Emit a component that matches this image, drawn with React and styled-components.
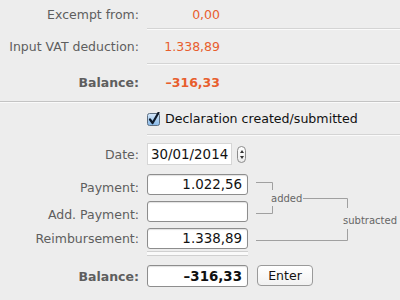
import styled, { createGlobalStyle } from "styled-components";

const GlobalStyle = createGlobalStyle`
  html, body {
    margin: 0;
    padding: 0;
    background: #ededed;
  }
  body {
    font-family: "DejaVu Sans", "Liberation Sans", sans-serif;
    font-size: 12px;
    width: 400px;
    height: 300px;
    overflow: hidden;
  }
`;

const Page = styled.div`
  width: 400px;
  height: 300px;
  background: #ededed;
`;

const Summary = styled.div`
  border-bottom: 1px solid #c4c4c4;
  box-shadow: 0 1px 0 #fafafa;
`;

const SummaryRow = styled.div`
  display: grid;
  grid-template-columns: 139px 1fr;
  column-gap: 8px;
  align-items: center;
  height: ${(p) => p.$height}px;
`;

const Label = styled.div`
  text-align: right;
  color: #5e5e5e;
  font-size: 12.5px;
  font-weight: ${(p) => (p.$bold ? "bold" : "normal")};
  white-space: nowrap;
`;

const Amount = styled.div`
  height: 100%;
  display: flex;
  align-items: center;
  box-sizing: border-box;
  color: #e85e2d;
  font-size: 12.5px;
  font-weight: ${(p) => (p.$bold ? "bold" : "normal")};
  border-bottom: ${(p) => (p.$line ? "1px solid #d4d4d4" : "none")};
  box-shadow: ${(p) => (p.$line ? "0 1px 0 #fafafa" : "none")};
`;

const AmountText = styled.span`
  width: 73px;
  text-align: right;
`;

const CheckRow = styled.div`
  display: grid;
  grid-template-columns: 139px 1fr;
  column-gap: 8px;
  height: 32px;
  margin-top: 1px;
`;

const CheckCell = styled.label`
  display: flex;
  align-items: center;
  gap: 4px;
  border-bottom: 1px solid #d4d4d4;
  box-shadow: 0 1px 0 #fafafa;
  font-size: 12.6px;
  color: #111;
`;

const Form = styled.div`
  display: grid;
  grid-template-columns: 139px 101px 1fr;
  column-gap: 8px;
  padding-top: 8px;
`;

const FormLabel = styled(Label)`
  align-self: center;
  margin-bottom: ${(p) => p.$gap || 0}px;
`;

const DateCell = styled.div`
  display: flex;
  align-items: center;
  gap: 5px;
  height: 22px;
  margin-bottom: 9px;
`;

const DateField = styled.div`
  width: 85px;
  height: 22px;
  box-sizing: border-box;
  background: #fff;
  border: 1px solid #d6d6d6;
  padding-left: 3px;
  display: flex;
  align-items: center;
  font-size: 13.4px;
  color: #111;
`;

const Stepper = styled.div`
  width: 9px;
  height: 17px;
  box-sizing: border-box;
  border: 1px solid #8c8c8c;
  border-radius: 5px;
  background: linear-gradient(#ffffff, #ececec);
  display: flex;
  flex-direction: column;
  align-items: center;
  justify-content: space-between;
  padding: 3px 0;
`;

const Arrow = styled.span`
  width: 0;
  height: 0;
  border-left: 2px solid transparent;
  border-right: 2px solid transparent;
  ${(p) =>
    p.$down ? "border-top: 3px solid #333;" : "border-bottom: 3px solid #333;"}
`;

const Field = styled.div`
  height: ${(p) => (p.$tall ? 22 : 21)}px;
  box-sizing: border-box;
  background: #fff;
  border: 1px solid #8d8d8d;
  border-radius: 3px;
  box-shadow: inset 0 1px 1px rgba(0, 0, 0, 0.12);
  display: flex;
  align-items: center;
  justify-content: flex-end;
  padding-right: 5px;
  font-size: 13.4px;
  color: #111;
  font-weight: ${(p) => (p.$bold ? "bold" : "normal")};
  margin-bottom: ${(p) => p.$gap || 0}px;
`;

const Bracket = styled.svg`
  grid-column: 3;
  grid-row: 2 / span 3;
  display: block;
  overflow: visible;
`;

const Divider = styled.div`
  grid-column: 2;
  height: 3px;
  border-top: 1px solid #d0d0d0;
  border-bottom: 1px solid #d0d0d0;
  background: #fafafa;
  margin: 2px 0 9px;
`;

const Button = styled.button`
  justify-self: start;
  width: 56px;
  height: 21px;
  margin-left: 1px;
  box-sizing: border-box;
  border: 1px solid #9a9a9a;
  border-radius: 4px;
  background: linear-gradient(#ffffff, #f1f1f1);
  font-family: "DejaVu Sans", "Liberation Sans", sans-serif;
  font-size: 12.5px;
  color: #111;
  padding: 0;
`;

const CheckBox = () => (
  <svg width="14" height="14" viewBox="0 0 14 14">
    <defs>
      <linearGradient id="cb" x1="0" y1="0" x2="0" y2="1">
        <stop offset="0" stopColor="#d6e8fa" />
        <stop offset="1" stopColor="#86b8e8" />
      </linearGradient>
    </defs>
    <rect x="0.5" y="1.5" width="12" height="12" rx="2" fill="url(#cb)" stroke="#5e6f82" />
    <path d="M3 7.5 L5.6 11 L11.5 0.8" fill="none" stroke="#0e1a2a" strokeWidth="2.2" strokeLinecap="round" strokeLinejoin="round" />
  </svg>
);

const summary = [
  { label: "Excempt from:", value: "0,00", height: 29, line: true },
  { label: "Input VAT deduction:", value: "1.338,89", height: 35, line: true },
  { label: "Balance:", value: "\u2013316,33", height: 37, bold: true },
];

export default function App() {
  return (
    <Page>
      <GlobalStyle />
      <Summary>
        {summary.map((row) => (
          <SummaryRow key={row.label} $height={row.height}>
            <Label $bold={row.bold}>{row.label}</Label>
            <Amount $line={row.line} $bold={row.bold}>
              <AmountText>{row.value}</AmountText>
            </Amount>
          </SummaryRow>
        ))}
      </Summary>
      <CheckRow>
        <span />
        <CheckCell>
          <CheckBox />
          Declaration created/submitted
        </CheckCell>
      </CheckRow>
      <Form>
        <FormLabel $gap={9}>Date:</FormLabel>
        <DateCell>
          <DateField>30/01/2014</DateField>
          <Stepper>
            <Arrow />
            <Arrow $down />
          </Stepper>
        </DateCell>
        <span />

        <FormLabel>Payment:</FormLabel>
        <Field $gap={6}>1.022,56</Field>
        <Bracket width="144" height="75" viewBox="0 0 144 75">
          <g fill="none" stroke="#a0a0a0" strokeWidth="1">
            <path d="M0 8.5 H16.5 V16" />
            <path d="M16.5 32 V39.5 H0" />
            <path d="M47 24.5 H91.5 V34" />
            <path d="M91.5 55 V66.5 H0" />
          </g>
          <g fill="#666" fontFamily="DejaVu Sans, sans-serif" fontSize="10">
            <text x="15" y="28">added</text>
            <text x="87" y="49.5">subtracted</text>
          </g>
        </Bracket>

        <FormLabel>Add. Payment:</FormLabel>
        <Field $gap={6} />

        <FormLabel>Reimbursement:</FormLabel>
        <Field>1.338,89</Field>

        <span />
        <Divider />
        <span />

        <FormLabel $bold>Balance:</FormLabel>
        <Field $tall $bold>
          {"\u2013"}316,33
        </Field>
        <Button>Enter</Button>
      </Form>
    </Page>
  );
}
